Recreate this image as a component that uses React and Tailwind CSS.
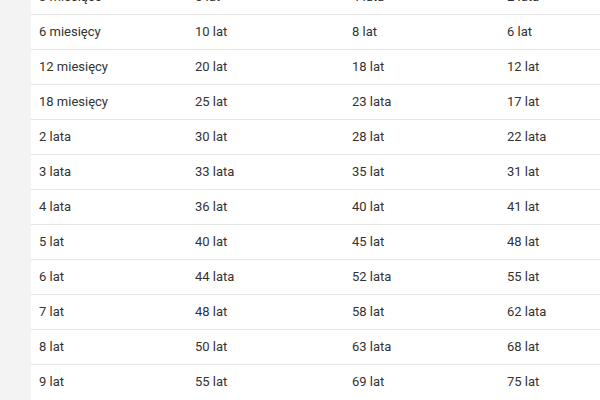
const rows = [
  ['3 miesiące', '5 lat', '4 lata', '2 lata'],
  ['6 miesięcy', '10 lat', '8 lat', '6 lat'],
  ['12 miesięcy', '20 lat', '18 lat', '12 lat'],
  ['18 miesięcy', '25 lat', '23 lata', '17 lat'],
  ['2 lata', '30 lat', '28 lat', '22 lata'],
  ['3 lata', '33 lata', '35 lat', '31 lat'],
  ['4 lata', '36 lat', '40 lat', '41 lat'],
  ['5 lat', '40 lat', '45 lat', '48 lat'],
  ['6 lat', '44 lata', '52 lata', '55 lat'],
  ['7 lat', '48 lat', '58 lat', '62 lata'],
  ['8 lat', '50 lat', '63 lata', '68 lat'],
  ['9 lat', '55 lat', '69 lat', '75 lat'],
]

export default function App() {
  return (
    <div className="w-[600px] h-[400px] overflow-hidden flex bg-white font-['Roboto','Liberation_Sans',sans-serif] text-[13px] text-[#333]">
      {/* grey page margin on the left */}
      <div className="w-[31px] shrink-0 bg-[#f3f3f3]" />
      <div className="flex-1 -mt-[21px]">
        {rows.map((r, i) => (
          <div
            key={i}
            className={
              'grid grid-cols-[156px_157px_155px_1fr] h-[35px] items-center ' +
              (i > 0 ? 'border-t border-[#e6e6e6]' : '')
            }
          >
            {r.map((c, j) => (
              <div key={j} className="pl-2 whitespace-nowrap">{c}</div>
            ))}
          </div>
        ))}
      </div>
    </div>
  )
}
